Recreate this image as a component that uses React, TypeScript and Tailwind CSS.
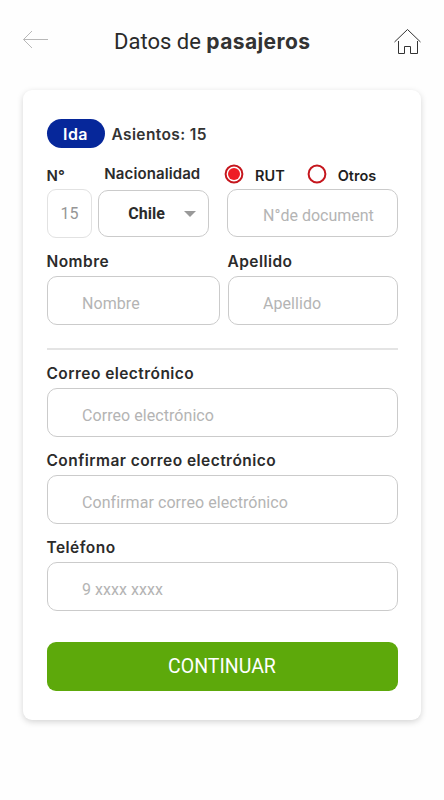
import type { ReactNode } from 'react'
import clsx from 'clsx'

function Label({ htmlFor, className, children }: { htmlFor?: string; className?: string; children: ReactNode }) {
  return (
    <label
      htmlFor={htmlFor}
      className={clsx("block whitespace-nowrap font-['Inter',sans-serif] font-semibold text-[#2b2b2b]", className)}
    >
      {children}
    </label>
  )
}

function Field({ id, label, type = 'text', placeholder }: { id: string; label: string; type?: string; placeholder: string }) {
  return (
    <div>
      <Label htmlFor={id} className="h-[27px] text-[15.5px] leading-[26px] tracking-[0.45px]">
        {label}
      </Label>
      <input
        id={id}
        type={type}
        placeholder={placeholder}
        className="block h-[49px] w-full rounded-[10px] border border-[#cbcbcb] bg-white pt-[6px] pr-4 pl-[34.5px] text-base tracking-[0.06px] text-gray-700 outline-none placeholder:text-[#b4b4b4]"
      />
    </div>
  )
}

function Radio({ label, checked = false }: { label: string; checked?: boolean }) {
  return (
    <div className="flex items-start">
      <svg width="20" height="20" viewBox="0 0 20 20" fill="none" aria-hidden>
        <circle cx="10" cy="10" r="8.4" stroke="#c5161d" strokeWidth="2" />
        {checked && <circle cx="10" cy="10" r="6" fill="#ee1c25" />}
      </svg>
      <span className="pt-[2px] pl-[11px] font-['Inter',sans-serif] text-[14.5px] leading-5 font-semibold text-[#1f1f1f]">
        {label}
      </span>
    </div>
  )
}

export default function App() {
  return (
    <main className="min-h-[800px] w-full bg-[#fefefe] font-['Roboto',sans-serif]">
      {/* Header */}
      <header className="flex h-[90px] items-start pr-[22px] pl-[22px]">
        <button type="button" aria-label="Volver" className="mt-[30px]">
          <svg width="27" height="20" viewBox="0 0 27 20" fill="none" stroke="#b8b8b8" strokeWidth="1">
            <path d="M10 1L1.5 9.5L10 18M1.5 9.5H26" />
          </svg>
        </button>
        <h1 className="mt-[28px] ml-[65px] text-[22px] leading-7 text-[#2a2a2a]">
          Datos de{' '}
          <span className="font-['Inter',sans-serif] text-[21px] font-bold tracking-[0.4px] text-[#333]">pasajeros</span>
        </h1>
        <button type="button" aria-label="Inicio" className="mt-[28px] ml-auto">
          <svg width="28" height="28" viewBox="0 0 28 28" fill="none" stroke="#333" strokeWidth="1">
            <path d="M0.5 14L13.5 1.5L26.5 14" />
            <path d="M4.5 13V25.5H10.5V18.5H16.5V25.5H23.5V13" />
          </svg>
        </button>
      </header>

      {/* Passenger card */}
      <form className="mr-[23px] ml-[23px] h-[630px] rounded-[9px] bg-white px-[23.5px] pt-[29px] shadow-[0_2px_6px_rgba(0,0,0,0.17)]">
        <div className="flex h-[29px] items-center font-['Inter',sans-serif]">
          <span className="flex h-[29px] w-[58px] items-center justify-center rounded-full bg-[#06279a] text-base font-semibold tracking-[0.4px] text-white">
            Ida
          </span>
          <span className="ml-[7px] pt-[3px] text-[15.5px] font-semibold tracking-[0.38px] text-[#333]">Asientos: 15</span>
        </div>

        {/* Document row */}
        <div className="mt-[15px] flex h-[75px]">
          <div className="w-[46px]">
            <Label className="h-[26px] text-[15px] leading-[25px]">N°</Label>
            <div className="flex h-[49px] items-center justify-center rounded-[9px] border border-[#e2e2e2] pt-px text-base text-[#969696]">
              15
            </div>
          </div>
          <div className="ml-[6px] w-[111px]">
            <Label className="h-[27px] pl-[6px] text-[15px] leading-[22px] tracking-[0.1px]">Nacionalidad</Label>
            <button
              type="button"
              className="flex h-[47px] w-full items-center justify-between rounded-[10px] border border-[#cbcbcb] pr-3 pl-[29px] text-base font-bold text-[#2b2b2b]"
            >
              Chile
              <svg width="12" height="6" viewBox="0 0 12 6" fill="#999" aria-hidden>
                <path d="M0 0H12L6 6Z" />
              </svg>
            </button>
          </div>
          <div className="ml-[18px] w-[171px]">
            <div className="-ml-[3px] flex h-[26px] items-start gap-[22px] pt-px">
              <Radio label="RUT" checked />
              <Radio label="Otros" />
            </div>
            <input
              aria-label="N° de documento"
              placeholder="N°de document"
              className="block h-[48px] w-full rounded-[10px] border border-[#cbcbcb] pt-1 pr-[18px] pl-[35px] text-base outline-none placeholder:text-[#b4b4b4]"
            />
          </div>
        </div>

        <div className="mt-[11px] grid grid-cols-[173px_1fr] gap-2">
          <Field id="nombre" label="Nombre" placeholder="Nombre" />
          <Field id="apellido" label="Apellido" placeholder="Apellido" />
        </div>

        <hr className="mt-[23px] border-t-2 border-[#e4e4e4]" />

        {/* Contact details */}
        <div className="mt-[11px] flex flex-col gap-[11px]">
          <Field id="correo" label="Correo electrónico" type="email" placeholder="Correo electrónico" />
          <Field id="confirmar" label="Confirmar correo electrónico" type="email" placeholder="Confirmar correo electrónico" />
          <Field id="telefono" label="Teléfono" type="tel" placeholder="9 xxxx xxxx" />
        </div>

        <button type="submit" className="mt-[31.4px] h-[49px] w-full rounded-[9px] bg-[#5da90b] text-[19.5px] text-white">
          CONTINUAR
        </button>
      </form>
    </main>
  )
}
